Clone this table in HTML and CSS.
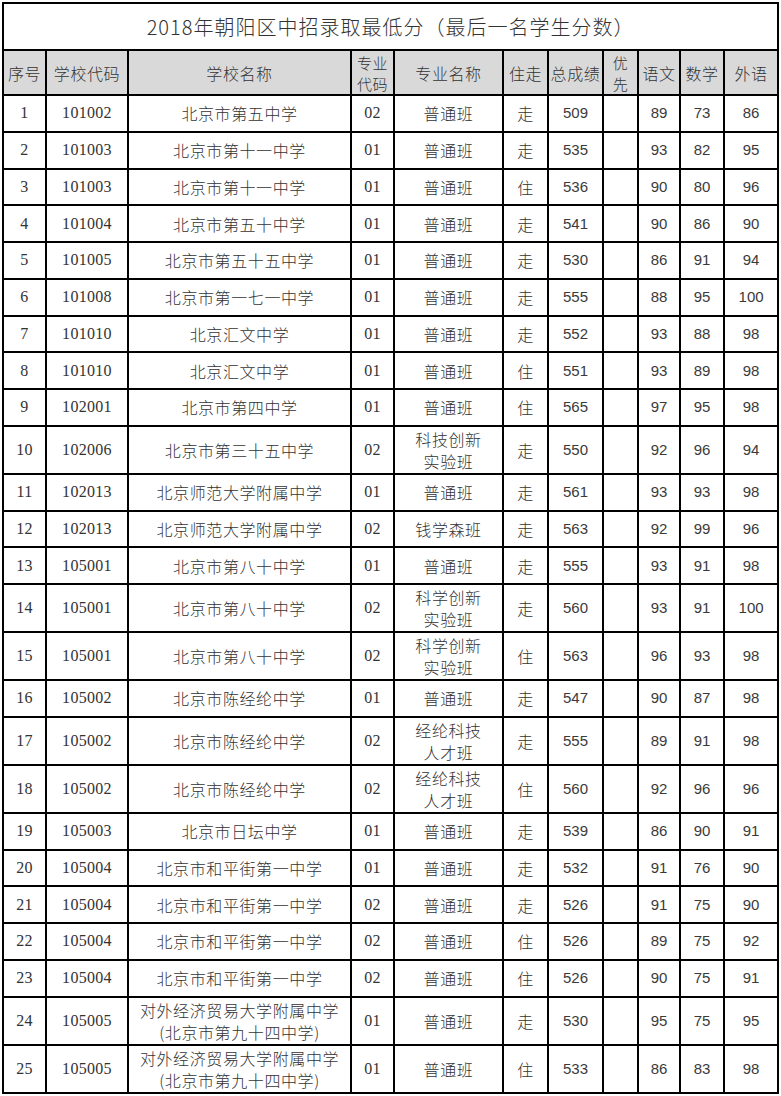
FILE: index.html
```html
<!DOCTYPE html>
<html lang="zh-CN">
<head>
<meta charset="utf-8">
<title>2018年朝阳区中招录取最低分</title>
<link rel="stylesheet" href="styles.css">
</head>
<body>
<table class="sheet">
  <colgroup>
    <col class="c-no"><col class="c-code"><col class="c-name"><col class="c-mcode"><col class="c-major">
    <col class="c-live"><col class="c-total"><col class="c-pri"><col class="c-s"><col class="c-m"><col class="c-e">
  </colgroup>
  <thead>
    <tr class="title-row"><th colspan="11" class="title">2018年朝阳区中招录取最低分（最后一名学生分数）</th></tr>
    <tr class="head-row">
      <th>序号</th><th>学校代码</th><th>学校名称</th><th class="two">专业<br>代码</th><th>专业名称</th>
      <th>住走</th><th>总成绩</th><th class="two">优<br>先</th><th>语文</th><th>数学</th><th>外语</th>
    </tr>
  </thead>
  <tbody>
    <tr><td class="serif">1</td><td class="serif">101002</td><td>北京市第五中学</td><td class="serif">02</td><td>普通班</td><td>走</td><td class="num">509</td><td></td><td class="num">89</td><td class="num">73</td><td class="num">86</td></tr>
    <tr><td class="serif">2</td><td class="serif">101003</td><td>北京市第十一中学</td><td class="serif">01</td><td>普通班</td><td>走</td><td class="num">535</td><td></td><td class="num">93</td><td class="num">82</td><td class="num">95</td></tr>
    <tr><td class="serif">3</td><td class="serif">101003</td><td>北京市第十一中学</td><td class="serif">01</td><td>普通班</td><td>住</td><td class="num">536</td><td></td><td class="num">90</td><td class="num">80</td><td class="num">96</td></tr>
    <tr><td class="serif">4</td><td class="serif">101004</td><td>北京市第五十中学</td><td class="serif">01</td><td>普通班</td><td>走</td><td class="num">541</td><td></td><td class="num">90</td><td class="num">86</td><td class="num">90</td></tr>
    <tr><td class="serif">5</td><td class="serif">101005</td><td>北京市第五十五中学</td><td class="serif">01</td><td>普通班</td><td>走</td><td class="num">530</td><td></td><td class="num">86</td><td class="num">91</td><td class="num">94</td></tr>
    <tr><td class="serif">6</td><td class="serif">101008</td><td>北京市第一七一中学</td><td class="serif">01</td><td>普通班</td><td>走</td><td class="num">555</td><td></td><td class="num">88</td><td class="num">95</td><td class="num">100</td></tr>
    <tr><td class="serif">7</td><td class="serif">101010</td><td>北京汇文中学</td><td class="serif">01</td><td>普通班</td><td>走</td><td class="num">552</td><td></td><td class="num">93</td><td class="num">88</td><td class="num">98</td></tr>
    <tr><td class="serif">8</td><td class="serif">101010</td><td>北京汇文中学</td><td class="serif">01</td><td>普通班</td><td>住</td><td class="num">551</td><td></td><td class="num">93</td><td class="num">89</td><td class="num">98</td></tr>
    <tr><td class="serif">9</td><td class="serif">102001</td><td>北京市第四中学</td><td class="serif">01</td><td>普通班</td><td>住</td><td class="num">565</td><td></td><td class="num">97</td><td class="num">95</td><td class="num">98</td></tr>
    <tr class="tall"><td class="serif">10</td><td class="serif">102006</td><td>北京市第三十五中学</td><td class="serif">02</td><td>科技创新<br>实验班</td><td>走</td><td class="num">550</td><td></td><td class="num">92</td><td class="num">96</td><td class="num">94</td></tr>
    <tr><td class="serif">11</td><td class="serif">102013</td><td>北京师范大学附属中学</td><td class="serif">01</td><td>普通班</td><td>走</td><td class="num">561</td><td></td><td class="num">93</td><td class="num">93</td><td class="num">98</td></tr>
    <tr><td class="serif">12</td><td class="serif">102013</td><td>北京师范大学附属中学</td><td class="serif">02</td><td>钱学森班</td><td>走</td><td class="num">563</td><td></td><td class="num">92</td><td class="num">99</td><td class="num">96</td></tr>
    <tr><td class="serif">13</td><td class="serif">105001</td><td>北京市第八十中学</td><td class="serif">01</td><td>普通班</td><td>走</td><td class="num">555</td><td></td><td class="num">93</td><td class="num">91</td><td class="num">98</td></tr>
    <tr class="tall"><td class="serif">14</td><td class="serif">105001</td><td>北京市第八十中学</td><td class="serif">02</td><td>科学创新<br>实验班</td><td>走</td><td class="num">560</td><td></td><td class="num">93</td><td class="num">91</td><td class="num">100</td></tr>
    <tr class="tall"><td class="serif">15</td><td class="serif">105001</td><td>北京市第八十中学</td><td class="serif">02</td><td>科学创新<br>实验班</td><td>住</td><td class="num">563</td><td></td><td class="num">96</td><td class="num">93</td><td class="num">98</td></tr>
    <tr><td class="serif">16</td><td class="serif">105002</td><td>北京市陈经纶中学</td><td class="serif">01</td><td>普通班</td><td>走</td><td class="num">547</td><td></td><td class="num">90</td><td class="num">87</td><td class="num">98</td></tr>
    <tr class="tall"><td class="serif">17</td><td class="serif">105002</td><td>北京市陈经纶中学</td><td class="serif">02</td><td>经纶科技<br>人才班</td><td>走</td><td class="num">555</td><td></td><td class="num">89</td><td class="num">91</td><td class="num">98</td></tr>
    <tr class="tall"><td class="serif">18</td><td class="serif">105002</td><td>北京市陈经纶中学</td><td class="serif">02</td><td>经纶科技<br>人才班</td><td>住</td><td class="num">560</td><td></td><td class="num">92</td><td class="num">96</td><td class="num">96</td></tr>
    <tr><td class="serif">19</td><td class="serif">105003</td><td>北京市日坛中学</td><td class="serif">01</td><td>普通班</td><td>走</td><td class="num">539</td><td></td><td class="num">86</td><td class="num">90</td><td class="num">91</td></tr>
    <tr><td class="serif">20</td><td class="serif">105004</td><td>北京市和平街第一中学</td><td class="serif">01</td><td>普通班</td><td>走</td><td class="num">532</td><td></td><td class="num">91</td><td class="num">76</td><td class="num">90</td></tr>
    <tr><td class="serif">21</td><td class="serif">105004</td><td>北京市和平街第一中学</td><td class="serif">02</td><td>普通班</td><td>走</td><td class="num">526</td><td></td><td class="num">91</td><td class="num">75</td><td class="num">90</td></tr>
    <tr><td class="serif">22</td><td class="serif">105004</td><td>北京市和平街第一中学</td><td class="serif">02</td><td>普通班</td><td>住</td><td class="num">526</td><td></td><td class="num">89</td><td class="num">75</td><td class="num">92</td></tr>
    <tr><td class="serif">23</td><td class="serif">105004</td><td>北京市和平街第一中学</td><td class="serif">02</td><td>普通班</td><td>住</td><td class="num">526</td><td></td><td class="num">90</td><td class="num">75</td><td class="num">91</td></tr>
    <tr class="tall"><td class="serif">24</td><td class="serif">105005</td><td>对外经济贸易大学附属中学<br>(北京市第九十四中学)</td><td class="serif">01</td><td>普通班</td><td>走</td><td class="num">530</td><td></td><td class="num">95</td><td class="num">75</td><td class="num">95</td></tr>
    <tr class="tall"><td class="serif">25</td><td class="serif">105005</td><td>对外经济贸易大学附属中学<br>(北京市第九十四中学)</td><td class="serif">01</td><td>普通班</td><td>住</td><td class="num">533</td><td></td><td class="num">86</td><td class="num">83</td><td class="num">98</td></tr>
  </tbody>
</table>
</body>
</html>
```

FILE: styles.css
```css
html, body {
  margin: 0;
  padding: 0;
  background: #ffffff;
}

body {
  padding: 2px 0 0 2px;
  font-family: "Noto Sans CJK SC", sans-serif;
  color: #333333;
}

.sheet {
  border-collapse: collapse;
  table-layout: fixed;
  width: 775px;
  border: 2px solid #000;
}

.c-no { width: 43px; }
.c-code { width: 82px; }
.c-name { width: 223px; }
.c-mcode { width: 43px; }
.c-major { width: 109px; }
.c-live { width: 45px; }
.c-total { width: 55px; }
.c-pri { width: 35px; }
.c-s { width: 42px; }
.c-m { width: 44px; }
.c-e { width: 54px; }

.sheet th,
.sheet td {
  border: 2px solid #000;
  padding: 0;
  text-align: center;
  vertical-align: middle;
  font-size: 16px;
  font-weight: 300;
  line-height: 22px;
  letter-spacing: 0.6px;
  white-space: nowrap;
  overflow: hidden;
}

.title-row { height: 47px; }

.sheet th.title {
  font-size: 20px;
  letter-spacing: 1px;
  background: #fff;
  color: #333;
}

.head-row { height: 45px; }

.head-row th {
  background: #d9d9d9;
  color: #333;
}

.head-row th.two {
  font-size: 15px;
  line-height: 21px;
}

.sheet tbody tr { height: 36.75px; }
.sheet tbody tr.tall { height: 48px; }

.sheet td.serif {
  font-family: "Liberation Serif", "Noto Sans CJK SC", serif;
  font-size: 16px;
  font-weight: 400;
  letter-spacing: 0.3px;
}

.sheet td.num {
  font-family: "Liberation Sans", Arial, sans-serif;
  font-size: 15px;
  font-weight: 400;
  letter-spacing: 0;
  color: #3a3a3a;
}
```
